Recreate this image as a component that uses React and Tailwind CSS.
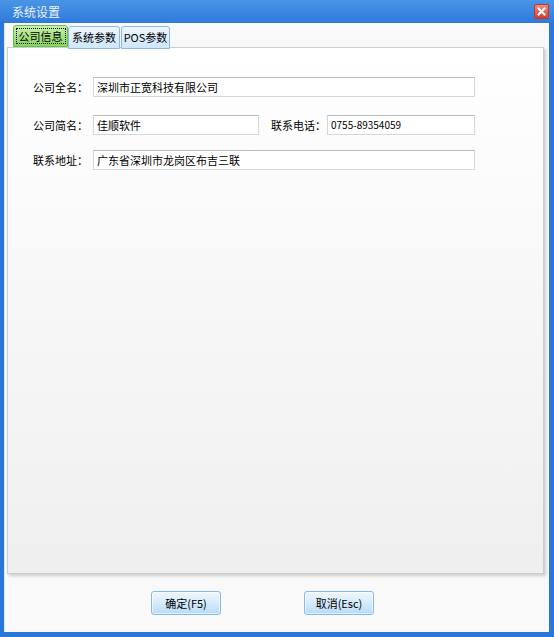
import React from "react";

const font = { fontFamily: '"Noto Sans CJK SC", "Noto Sans", sans-serif' };

function Field({ value, w, small }) {
  return (
    <div
      className={`h-[20px] ${w} bg-white border border-[#d5d7dc] border-t-[#b9bcc4] flex items-center pl-[3px] ${small ? "text-[10px]" : "text-[11px]"} text-black leading-none`}
    >
      {value}
    </div>
  );
}

function Btn({ children }) {
  return (
    <button className="w-[70px] h-[24px] rounded-[3px] border border-[#8ab8e6] bg-gradient-to-b from-[#eef7fe] via-[#d6ebfb] to-[#b6dbf7] text-[11px] text-black leading-none flex items-center justify-center shadow-[inset_0_0_0_1px_rgba(255,255,255,0.6)]">
      {children}
    </button>
  );
}

export default function App() {
  return (
    <div style={font} className="w-[554px] h-[637px] bg-[#2b77d8] flex flex-col pl-[4px] pr-[5px] pb-[5px]">
      {/* title bar */}
      <div className="h-[23px] -ml-[4px] -mr-[5px] pl-[12px] pr-[5px] bg-gradient-to-b from-[#4a95e6] to-[#2f7ad9] flex items-center justify-between">
        <span className="text-[12px] text-[#eef3fb] leading-none">系统设置</span>
        <div className="w-[15px] h-[15px] rounded-[2px] border border-[#b33a32] bg-gradient-to-b from-[#f08a80] to-[#d4392e] flex items-center justify-center">
          <svg width="9" height="9" viewBox="0 0 9 9">
            <path d="M1.5 1.5 L7.5 7.5 M7.5 1.5 L1.5 7.5" stroke="#ffffff" strokeWidth="2" strokeLinecap="square" />
          </svg>
        </div>
      </div>
      {/* content */}
      <div className="flex-1 bg-[#f9f9f9] border-l border-[#dfe6ef] flex flex-col pt-[2px]">
        {/* tabs */}
        <div className="flex items-start pl-[8px] h-[22px] relative z-10">
          <div className="w-[55px] h-[22px] rounded-t-[3px] border border-[#6cbf55] bg-gradient-to-b from-[#c9f0a8] to-[#86d65a] flex items-center justify-center">
            <div className="border border-dotted border-black px-[2px] h-[16px] flex items-center text-[11px] leading-none text-black">
              公司信息
            </div>
          </div>
          <div className="w-[52px] h-[23px] mt-[1px] rounded-t-[3px] border border-[#8fb7df] bg-gradient-to-b from-[#eef7fe] to-[#cfe6fa] flex items-center justify-center text-[11px] leading-none text-black">
            系统参数
          </div>
          <div className="w-[49px] h-[23px] mt-[1px] ml-[1px] rounded-t-[3px] border border-[#8fb7df] bg-gradient-to-b from-[#eef7fe] to-[#cfe6fa] flex items-center justify-center text-[11px] leading-none text-black">
            POS参数
          </div>
        </div>
        {/* panel */}
        <div className="ml-[2px] w-[537px] h-[527px] border border-[#cdcdcd] bg-gradient-to-b from-[#ffffff] to-[#efefef] shadow-[2px_2px_3px_rgba(0,0,0,0.18)] pt-[29px] flex flex-col gap-[15px]">
          <div className="flex items-center">
            <span className="w-[60px] ml-[25px] text-[11px] text-black leading-none">公司全名：</span>
            <Field value="深圳市正宽科技有限公司" w="w-[382px]" />
          </div>
          <div className="flex items-center mt-[3px]">
            <span className="w-[60px] ml-[25px] text-[11px] text-black leading-none">公司简名：</span>
            <Field value="佳顺软件" w="w-[166px]" />
            <span className="ml-[12px] w-[56px] text-[11px] text-black leading-none">联系电话：</span>
            <Field value="0755-89354059" w="w-[148px]" small />
          </div>
          <div className="flex items-center">
            <span className="w-[60px] ml-[25px] text-[11px] text-black leading-none">联系地址：</span>
            <Field value="广东省深圳市龙岗区布吉三联" w="w-[382px]" />
          </div>
        </div>
        {/* buttons */}
        <div className="flex items-center pl-[146px] gap-[83px] mt-[17px]">
          <Btn>确定(F5)</Btn>
          <Btn>取消(Esc)</Btn>
        </div>
      </div>
    </div>
  );
}
